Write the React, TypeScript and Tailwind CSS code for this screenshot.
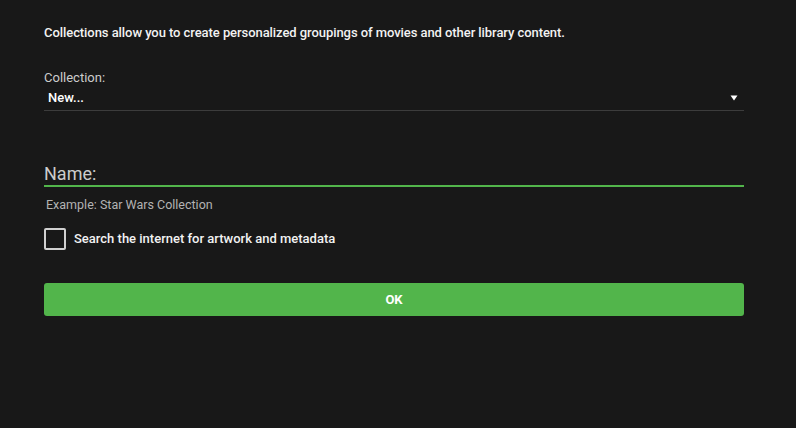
import React from "react";

export default function App() {
  return (
    <div className="w-[796px] h-[428px] bg-[#181818] text-white overflow-hidden" style={{ fontFamily: "Roboto, 'Noto Sans', sans-serif" }}>
      <div className="ml-[44px] w-[700px] pt-[25px] flex flex-col">
        <div className="text-[13px] font-medium leading-[16px] text-[#f2f2f2] tracking-[-0.005em]">
          Collections allow you to create personalized groupings of movies and other library content.
        </div>
        <div className="mt-[29px] text-[13px] leading-[16px] text-[#cccccc]">Collection:</div>
        <div className="relative h-[25px] border-b border-[#3c3c3c] flex items-center">
          <span className="pl-[4px] text-[13px] font-medium text-white leading-[16px]">New...</span>
          <svg className="absolute right-[6px] top-[8px]" width="8" height="8" viewBox="0 0 8 8">
            <path d="M0.5 1.5 L7.5 1.5 L4 6.5 Z" fill="#ffffff" />
          </svg>
        </div>
        <div className="mt-[50px] h-[26px] border-b-2 border-[#52b54b] flex items-end">
          <span className="text-[18px] leading-[22px] text-[#cccccc]">Name:</span>
        </div>
        <div className="mt-[10px] pl-[2px] text-[12.5px] leading-[16px] text-[#b3b3b3]">Example: Star Wars Collection</div>
        <div className="mt-[15px] flex items-center">
          <div className="w-[22px] h-[22px] border-2 border-[#d0d0d0] rounded-[2px]"></div>
          <span className="ml-[8px] text-[13px] font-medium leading-[16px] text-[#f2f2f2]">Search the internet for artwork and metadata</span>
        </div>
        <button className="mt-[33px] h-[33px] w-full bg-[#52b54b] rounded-[3px] text-[13px] font-bold text-white uppercase">OK</button>
      </div>
    </div>
  );
}
